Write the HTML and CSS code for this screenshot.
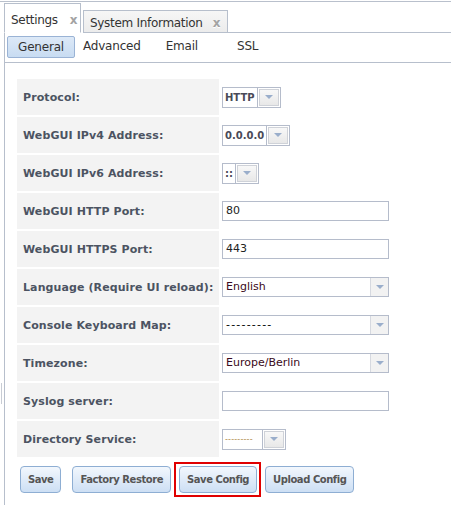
FILE: index.html
```html
<!DOCTYPE html>
<html>
<head>
<meta charset="utf-8">
<link rel="stylesheet" href="styles.css">
</head>
<body>
<div class="screen">
  <div class="splitter"></div>
  <div class="tabbar">
    <div class="tab active"><span class="tab-title">Settings</span><span class="tab-close">x</span></div>
    <div class="tab"><span class="tab-title">System Information</span><span class="tab-close">x</span></div>
    <div class="tab-rest"></div>
  </div>
  <div class="panel">
    <div class="subtabs">
      <span class="subtab selected">General</span>
      <span class="subtab st-adv">Advanced</span>
      <span class="subtab st-email">Email</span>
      <span class="subtab st-ssl">SSL</span>
    </div>
    <div class="content">
      <div class="form">
        <div class="label">Protocol:</div>
        <div class="field"><span class="combo small"><span class="combo-val bold">HTTP</span><span class="combo-btn"><i class="tri"></i></span></span></div>

        <div class="label">WebGUI IPv4 Address:</div>
        <div class="field"><span class="combo small"><span class="combo-val bold">0.0.0.0</span><span class="combo-btn"><i class="tri"></i></span></span></div>

        <div class="label">WebGUI IPv6 Address:</div>
        <div class="field"><span class="combo small"><span class="combo-val bold">::</span><span class="combo-btn"><i class="tri"></i></span></span></div>

        <div class="label">WebGUI HTTP Port:</div>
        <div class="field"><span class="textbox">80</span></div>

        <div class="label">WebGUI HTTPS Port:</div>
        <div class="field"><span class="textbox">443</span></div>

        <div class="label">Language (Require UI reload):</div>
        <div class="field"><span class="select"><span class="select-val dark">English</span><span class="select-btn"><i class="tri"></i></span></span></div>

        <div class="label">Console Keyboard Map:</div>
        <div class="field"><span class="select"><span class="select-val black dash-text">---------</span><span class="select-btn"><i class="tri"></i></span></span></div>

        <div class="label">Timezone:</div>
        <div class="field"><span class="select"><span class="select-val dark">Europe/Berlin</span><span class="select-btn"><i class="tri"></i></span></span></div>

        <div class="label">Syslog server:</div>
        <div class="field"><span class="textbox"></span></div>

        <div class="label">Directory Service:</div>
        <div class="field"><span class="combo small"><span class="combo-val dashes">---------</span><span class="combo-btn"><i class="tri"></i></span></span></div>
      </div>
      <div class="buttons">
        <span class="btn btn-save">Save</span>
        <span class="btn">Factory Restore</span>
        <span class="btn">Save Config<span class="highlight"></span></span>
        <span class="btn">Upload Config</span>
      </div>
    </div>
  </div>
</div>
</body>
</html>
```

FILE: styles.css
```css
* { box-sizing: border-box; }
html, body { margin: 0; padding: 0; background: #fff; }
body {
  font-family: "DejaVu Sans", Verdana, sans-serif;
  font-size: 11px;
  color: #333;
  width: 451px;
  height: 505px;
  overflow: hidden;
}
.screen {
  position: relative;
  height: 505px;
  border-top: 1px solid #b9c0cc;
  margin-top: 1px;
}
.splitter {
  position: absolute;
  left: 1px;
  top: 381px;
  width: 1px;
  height: 21px;
  background: #c8ccd4;
}
.tabbar {
  display: flex;
  align-items: flex-end;
  height: 31px;
  padding-left: 4px;
  padding-top: 1px;
}
.tab {
  display: flex;
  align-items: center;
  height: 23px;
  border: 1px solid #b7bfcc;
  background: linear-gradient(#f6f6f6, #ececec);
  margin-left: 2px;
  padding: 0 6px;
  color: #333;
}
.tab.active {
  height: 30px;
  margin-left: 0;
  background: #fff;
  border-bottom-color: #fff;
  width: 77px;
  padding-top: 4px;
}
.tab.active .tab-title { margin-right: 12px; }
.tab-title { font-size: 12px; letter-spacing: -0.3px; }
.tab:not(.active) { width: 145px; padding-top: 2px; }
.tab:not(.active) .tab-title { margin-right: 10px; }
.tab-close {
  font-weight: bold;
  font-size: 12px;
  color: #a3a3a3;
  text-shadow: 0 1px 0 #fff;
}
.tab-rest {
  flex: 1;
  height: 1px;
  background: #b7bfcc;
}
.panel {
  margin-left: 4px;
  border-left: 1px solid #b7bfcc;
  height: 472px;
}
.subtabs {
  display: flex;
  align-items: center;
  height: 30px;
  border-bottom: 1px solid #b7bfcc;
  padding-left: 2px;
  padding-bottom: 2px;
}
.subtab {
  font-size: 12px;
  color: #333;
  letter-spacing: -0.2px;
  height: 22px;
  line-height: 20px;
}
.subtab.selected {
  width: 68px;
  text-align: center;
  border: 1px solid #9ab3d5;
  border-radius: 2px;
  background: linear-gradient(#dde9f7, #c8dcf2);
}
.st-adv { margin-left: 8px; }
.st-email { margin-left: 25px; }
.st-ssl { margin-left: 39px; }
.content {
  padding: 16px 0 0 12px;
}
.form {
  display: grid;
  grid-template-columns: 202px 1fr;
  grid-auto-rows: 36px;
  row-gap: 2px;
  column-gap: 3px;
}
.label {
  background: #f3f3f3;
  font-weight: bold;
  color: #4c5362;
  font-size: 11px;
  letter-spacing: 0.1px;
  display: flex;
  align-items: center;
  padding-left: 6px;
  white-space: nowrap;
}
.field {
  display: flex;
  align-items: center;
}
.textbox {
  width: 167px;
  height: 20px;
  border: 1px solid #b5bccb;
  font-size: 11px;
  line-height: 18px;
  padding-left: 3px;
  color: #222;
}
.select {
  display: flex;
  width: 167px;
  height: 20px;
  border: 1px solid #b5bccb;
}
.select-val {
  flex: 1;
  font-size: 11px;
  line-height: 18px;
  padding-left: 3px;
}
.dash-text { letter-spacing: 1.2px; }
.dark { color: #3a0a20; }
.black { color: #000; }
.select-btn {
  width: 18px;
  border-left: 1px solid #d6d9e0;
  background: #f2f2f2;
  display: flex;
  align-items: center;
  justify-content: center;
}
.tri {
  display: block;
  width: 0;
  height: 0;
  border-left: 4px solid transparent;
  border-right: 4px solid transparent;
  border-top: 4px solid #9aaecb;
}
.combo {
  display: flex;
  height: 21px;
  border: 1px solid #b5bccb;
  background: #fff;
}
.combo-val {
  font-size: 10px;
  line-height: 19px;
  padding: 0 2px;
  border-right: 1px solid #b5bccb;
  color: #333;
}
.combo-val.bold { font-weight: bold; color: #4a4a58; }
.combo-val.dashes { color: #b08a4a; letter-spacing: 0.2px; font-size: 8px; width: 40px; overflow: hidden; }
.combo-btn {
  width: 20px;
  margin: 1px;
  border: 1px solid #cfd2d8;
  background: linear-gradient(#f8f8f8, #e8e8e8);
  display: flex;
  align-items: center;
  justify-content: center;
}
.buttons {
  display: flex;
  gap: 8px;
  margin-top: 9px;
  padding-left: 3px;
}
.btn {
  position: relative;
  height: 27px;
  line-height: 25px;
  padding: 0 7px;
  border: 1px solid #8eaed3;
  border-radius: 4px;
  background: linear-gradient(#f2f7fd, #cddff4);
  font-weight: bold;
  font-size: 10px;
  letter-spacing: -0.45px;
  color: #555;
  white-space: nowrap;
}
.btn-save { margin-right: 3px; }
.highlight {
  position: absolute;
  left: -6px;
  right: -5px;
  top: -5px;
  bottom: -5px;
  border: 2px solid #e00000;
}
```
